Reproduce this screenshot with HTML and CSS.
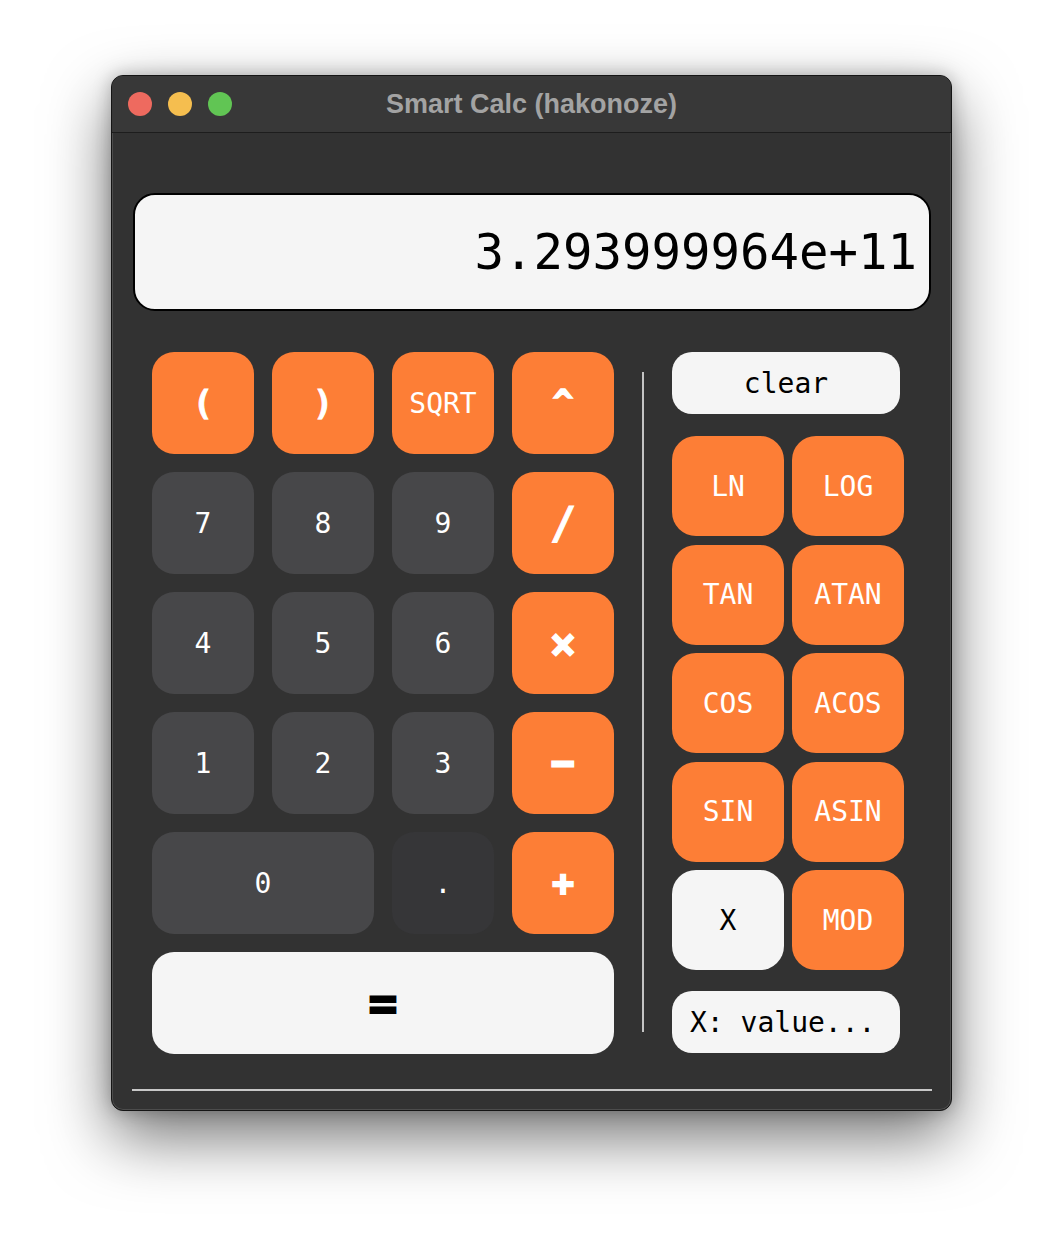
FILE: index.html
```html
<!DOCTYPE html>
<html lang="en">
<head>
<meta charset="utf-8">
<title>Smart Calc (hakonoze)</title>
<link rel="stylesheet" href="styles.css">
</head>
<body>
<div class="window">
  <div class="titlebar">
    <div class="lights">
      <span class="light red"></span>
      <span class="light yellow"></span>
      <span class="light green"></span>
    </div>
    <div class="title">Smart Calc (hakonoze)</div>
    <div></div>
  </div>
  <div class="content">
    <div class="display">3.293999964e+11</div>
    <div class="main">
      <div class="keypad">
        <button class="key op sym paren">(</button>
        <button class="key op sym paren">)</button>
        <button class="key op">SQRT</button>
        <button class="key op sym caret">^</button>
        <button class="key num">7</button>
        <button class="key num">8</button>
        <button class="key num">9</button>
        <button class="key op sym slash">/</button>
        <button class="key num">4</button>
        <button class="key num">5</button>
        <button class="key num">6</button>
        <button class="key op sym times">×</button>
        <button class="key num">1</button>
        <button class="key num">2</button>
        <button class="key num">3</button>
        <button class="key op sym minus">−</button>
        <button class="key num wide">0</button>
        <button class="key dot">.</button>
        <button class="key op sym plus">+</button>
        <button class="key equals">=</button>
      </div>
      <div class="divider"></div>
      <div class="side">
        <button class="clear">clear</button>
        <div class="fngrid">
          <button class="key op">LN</button>
          <button class="key op">LOG</button>
          <button class="key op">TAN</button>
          <button class="key op">ATAN</button>
          <button class="key op">COS</button>
          <button class="key op">ACOS</button>
          <button class="key op">SIN</button>
          <button class="key op">ASIN</button>
          <button class="key light-key">X</button>
          <button class="key op">MOD</button>
        </div>
        <div class="xinput">X: value...</div>
      </div>
    </div>
    <div class="footer-line"></div>
  </div>
</div>
</body>
</html>
```
FILE: styles.css
```css
html, body {
  margin: 0;
  padding: 0;
}
body {
  background: #ffffff;
  padding: 75px 0 0 111px;
  height: 1260px;
  box-sizing: border-box;
  overflow: hidden;
  font-family: "DejaVu Sans Mono", "Liberation Mono", monospace;
}
.window {
  width: 841px;
  height: 1036px;
  box-sizing: border-box;
  border: 1px solid #151515;
  border-radius: 12px;
  background: #323232;
  box-shadow: inset 0 0 0 1px rgba(255,255,255,0.13), 0 26px 64px rgba(0,0,0,0.55), 0 0 18px rgba(0,0,0,0.25);
  overflow: hidden;
}
.titlebar {
  height: 56px;
  border-bottom: 1px solid #1d1d1d;
  background: #383838;
  display: grid;
  grid-template-columns: 1fr auto 1fr;
  align-items: center;
}
.lights {
  display: flex;
  gap: 16px;
  padding-left: 16px;
}
.light {
  width: 24px;
  height: 24px;
  border-radius: 50%;
  display: block;
}
.red { background: #ee6a5f; }
.yellow { background: #f5be4f; }
.green { background: #61c554; }
.title {
  font-family: "Liberation Sans", Arial, sans-serif;
  font-weight: bold;
  font-size: 27px;
  color: #a3a3a3;
  padding-top: 1px;
}
.content {
  padding: 60px 19px 0 20px;
}
.display {
  margin: 0 1px 0 1px;
  height: 118px;
  box-sizing: border-box;
  border: 2px solid #000;
  border-radius: 22px;
  background: #f5f5f5;
  display: flex;
  align-items: center;
  justify-content: flex-end;
  padding-right: 12px;
  font-size: 49px;
  color: #000;
}
.main {
  margin-top: 41px;
  padding-left: 20px;
  display: flex;
}
button {
  font-family: "DejaVu Sans Mono", "Liberation Mono", monospace;
  border: none;
  margin: 0;
  padding: 0;
  cursor: pointer;
}
.keypad {
  display: grid;
  grid-template-columns: repeat(4, 102px);
  grid-auto-rows: 102px;
  gap: 18px;
}
.key {
  border-radius: 22px;
  font-size: 28px;
  color: #fff;
  display: flex;
  align-items: center;
  justify-content: center;
}
.op { background: #fd7e36; }
.num { background: #474749; }
.dot { background: #363638; }
.wide { grid-column: span 2; }
.sym { font-weight: bold; }
.paren { font-size: 34px; -webkit-text-stroke: 0.8px #fff; }
.caret { font-size: 34px; -webkit-text-stroke: 1.5px #fff; padding-bottom: 2px; }
.slash { font-size: 44px; -webkit-text-stroke: 0.8px #fff; }
.times { font-size: 44px; -webkit-text-stroke: 1.5px #fff; }
.minus { font-size: 38px; -webkit-text-stroke: 2.5px #fff; }
.plus { font-size: 36px; -webkit-text-stroke: 2px #fff; }
.equals {
  grid-column: span 4;
  background: #f5f5f5;
  color: #000;
  font-weight: bold;
  font-size: 48px;
  -webkit-text-stroke: 2px #000;
}
.divider {
  width: 2px;
  background: #c4c4c4;
  margin: 20px 0 22px 28px;
}
.side {
  margin-left: 28px;
  width: 232px;
  display: flex;
  flex-direction: column;
}
.clear {
  width: 228px;
  height: 62px;
  border-radius: 20px;
  background: #f5f5f5;
  color: #000;
  font-size: 28px;
}
.fngrid {
  margin-top: 22px;
  display: grid;
  grid-template-columns: repeat(2, 112px);
  grid-auto-rows: 100px;
  column-gap: 8px;
  row-gap: 8.5px;
}
.fngrid .key { border-radius: 24px; }
.light-key {
  background: #f5f5f5;
  color: #000;
}
.xinput {
  margin-top: 21px;
  width: 228px;
  height: 62px;
  box-sizing: border-box;
  border-radius: 20px;
  background: #f5f5f5;
  color: #000;
  font-size: 28px;
  display: flex;
  align-items: center;
  padding-left: 18px;
  white-space: nowrap;
}
.footer-line {
  margin-top: 35px;
  height: 2px;
  background: #c8c8c8;
}
```
